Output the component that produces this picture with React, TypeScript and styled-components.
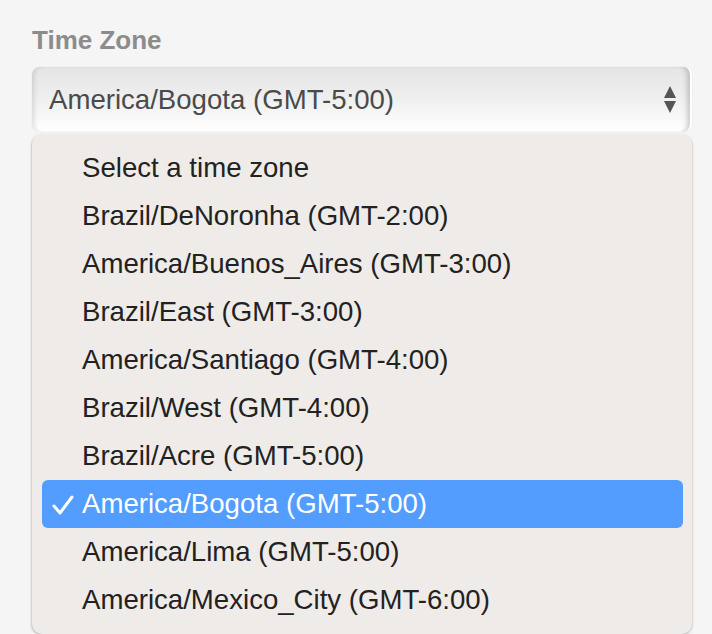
import React from "react";
import styled, { createGlobalStyle } from "styled-components";

const Global = createGlobalStyle`
  html, body { margin: 0; padding: 0; background: #f5f5f5; }
  body { font-family: "Liberation Sans", Arial, Helvetica, sans-serif; }
`;

const Page = styled.div`
  width: 712px;
  height: 634px;
  overflow: hidden;
  box-sizing: border-box;
  padding: 25px 20px 0 32px;
  background: #f5f5f5;
  display: flex;
  flex-direction: column;
`;

const Label = styled.div`
  font-size: 26px;
  line-height: 30px;
  font-weight: 700;
  color: #8c8c8c;
`;

const SelectBox = styled.div`
  margin-top: 12px;
  height: 65px;
  box-sizing: border-box;
  border-radius: 8px;
  background: linear-gradient(#e5e5e5 0%, #eeeeee 45%, #ffffff 100%);
  box-shadow: inset 5px 0 5px -3px rgba(0, 0, 0, 0.12),
    inset -6px 0 5px -3px rgba(0, 0, 0, 0.18), 0 0 0 1px #f0f0f0;
  border-right: 2px solid #ffffff;
  display: flex;
  align-items: center;
  justify-content: space-between;
  padding: 0 13px 0 17px;
`;

const SelectValue = styled.span`
  font-size: 27.6px;
  color: #4a4a4a;
`;

const Arrows = styled.svg`
  width: 14px;
  height: 28px;
  display: block;
`;

const Menu = styled.div`
  margin-top: 2px;
  box-sizing: border-box;
  height: 500px;
  border-radius: 10px;
  background: #eeebe8;
  box-shadow: -1px 1px 2px rgba(0, 0, 0, 0.18), 1px 1px 2px rgba(0, 0, 0, 0.12);
  padding: 10px 9px 10px 10px;
  display: flex;
  flex-direction: column;
`;

const Item = styled.div<{ $selected?: boolean }>`
  height: 48px;
  border-radius: 6px;
  display: flex;
  align-items: center;
  padding-left: 40px;
  position: relative;
  font-size: 27.6px;
  color: ${(p) => (p.$selected ? "#ffffff" : "#222222")};
  background: ${(p) => (p.$selected ? "#529dff" : "transparent")};
`;

const Check = styled.svg`
  position: absolute;
  left: 10px;
  top: 15px;
  width: 22px;
  height: 20px;
`;

const items = [
  "Select a time zone",
  "Brazil/DeNoronha (GMT-2:00)",
  "America/Buenos_Aires (GMT-3:00)",
  "Brazil/East (GMT-3:00)",
  "America/Santiago (GMT-4:00)",
  "Brazil/West (GMT-4:00)",
  "Brazil/Acre (GMT-5:00)",
  "America/Bogota (GMT-5:00)",
  "America/Lima (GMT-5:00)",
  "America/Mexico_City (GMT-6:00)",
];

const selected = "America/Bogota (GMT-5:00)";

export default function App() {
  return (
    <>
      <Global />
      <Page>
        <Label>Time Zone</Label>
        <SelectBox>
          <SelectValue>{selected}</SelectValue>
          <Arrows viewBox="0 0 14 28">
            <path d="M7 0 L13 12 L1 12 Z" fill="#555" />
            <path d="M1 15 L13 15 L7 27 Z" fill="#555" />
          </Arrows>
        </SelectBox>
        <Menu>
          {items.map((it) => (
            <Item key={it} $selected={it === selected}>
              {it === selected && (
                <Check viewBox="0 0 22 20">
                  <path
                    d="M2 11 L8 18 L20 2"
                    fill="none"
                    stroke="#fff"
                    strokeWidth="3"
                    strokeLinecap="round"
                    strokeLinejoin="round"
                  />
                </Check>
              )}
              {it}
            </Item>
          ))}
        </Menu>
      </Page>
    </>
  );
}
